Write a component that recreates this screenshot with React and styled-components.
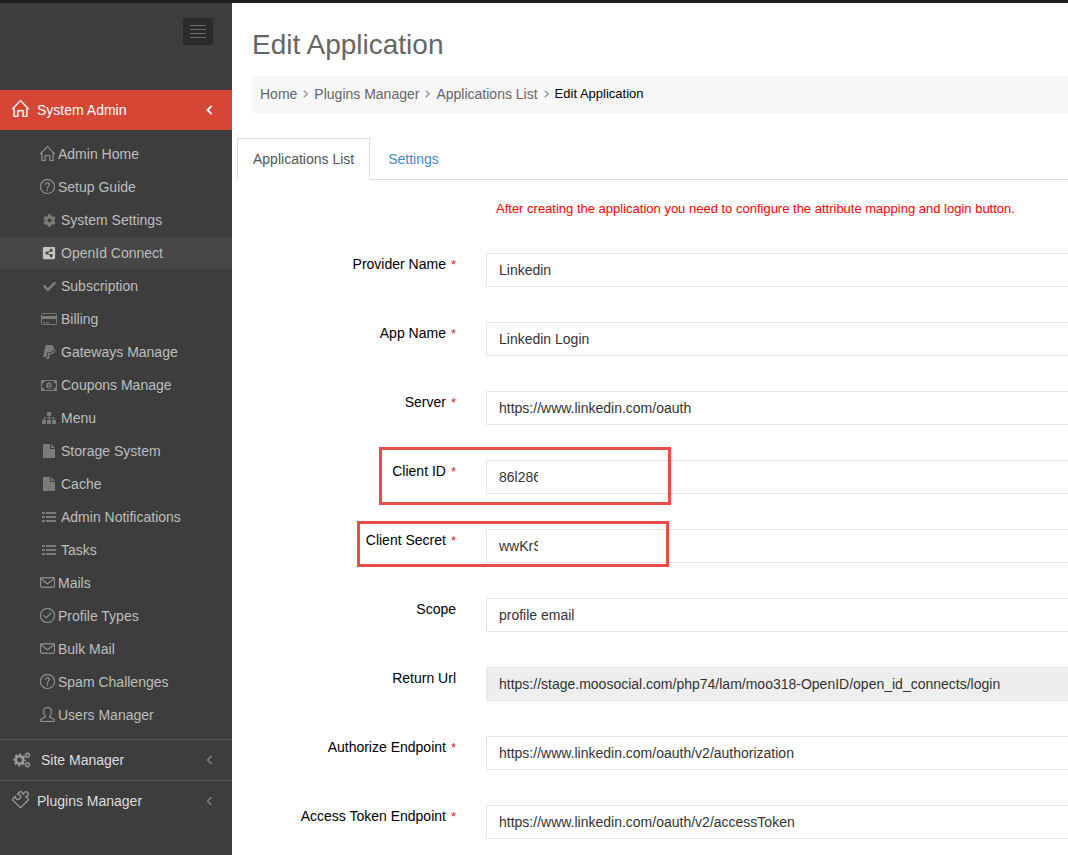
import React from 'react';
import styled, { createGlobalStyle, css } from 'styled-components';
import { SlHome, SlQuestion, SlEnvolope, SlCheck, SlUser, SlPuzzle } from 'react-icons/sl';
import { FaCog, FaShareAltSquare, FaCheck } from 'react-icons/fa';

const GlobalStyle = createGlobalStyle`
  * {
    box-sizing: border-box;
  }

  body {
    margin: 0;
    background: #fff;
    color: #000;
    font: 14px/20px "Liberation Sans", Arial, sans-serif;
  }

  a {
    color: inherit;
    text-decoration: none;
  }

  ul, ol {
    margin: 0;
    padding: 0;
    list-style: none;
  }
`;

const Page = styled.div`
  display: flex;
  min-height: 100vh;
  border-top: 3px solid #1f1f1f;
  overflow: hidden;
`;

const Sidebar = styled.nav`
  flex: 0 0 232px;
  background: #3d3d3d;
`;

const SidebarTop = styled.div`
  display: flex;
  justify-content: flex-end;
  height: 87px;
  padding: 15px 19px;
`;

const Toggler = styled.button`
  display: flex;
  align-items: center;
  justify-content: center;
  width: 30px;
  height: 27px;
  padding: 0;
  border: 0;
  background: #2b2b2b;
  color: #6b6b6b;
`;

const SectionLink = styled.a`
  display: flex;
  align-items: center;
  height: 40px;
  padding: 0 19px 0 12px;
  color: ${props => props.$active ? '#fff' : '#ddd'};
  background: ${props => props.$active ? '#d64635' : 'transparent'};

  > svg {
    color: ${props => props.$active ? '#fff' : '#888'};
  }
`;

const SectionIcon = styled.span`
  display: flex;
  color: ${props => props.$active ? '#fff' : '#999'};

  ${props => props.$line && css`
    padding-bottom: 4px;

    svg {
      stroke: currentColor;
      stroke-width: 24px;
    }
  `}
`;

const SectionTitle = styled.span`
  flex: 1;
  padding-left: ${props => props.$wide ? '10px' : '8px'};
`;

const Section = styled.li`
  & + & {
    border-top: 1px solid #4f4f4f;
  }
`;

const SubMenu = styled.ul`
  display: flex;
  flex-direction: column;
  gap: 1px;
  padding: 8px 0;
`;

const SubLink = styled.a`
  display: flex;
  align-items: center;
  gap: 3px;
  height: 32px;
  padding-left: 40px;
  color: #bdbdbd;

  ${props => props.$active && css`
    background: #474747;
  `}
`;

const MenuIcon = styled.span`
  display: flex;
  justify-content: center;
  width: 18px;
  color: ${props => props.$active ? '#c4c4c4' : '#7b7b7b'};
`;

const LineIcon = styled.span`
  display: flex;
  width: 15px;
  padding-bottom: 2px;
  color: #959595;

  svg {
    stroke: currentColor;
    stroke-width: 16px;
  }
`;

const Main = styled.main`
  flex: 1;
  min-width: 0;
`;

const PageHead = styled.header`
  padding: 22px 0 0 20px;
`;

const Title = styled.h1`
  margin: 0 0 11px;
  font-size: 28px;
  font-weight: 400;
  line-height: 40px;
  color: #666;
`;

const Breadcrumb = styled.ol`
  display: flex;
  gap: 6px;
  padding: 8px 8px 9px;
  background: #f7f7f7;
  color: #666;

  li {
    display: flex;
    align-items: center;
    gap: 6px;
  }

  svg {
    color: #999;
  }
`;

const Current = styled.span`
  font-size: 13px;
  color: #000;
`;

const Tabs = styled.div`
  display: flex;
  gap: 2px;
  margin: 25px 0 0 5px;
  border-bottom: 1px solid #ddd;
`;

const Tab = styled.a`
  margin-bottom: -1px;
  padding: 10px 15px;
  border: 1px solid transparent;
  color: #428bca;

  ${props => props.$active && css`
    border-color: #ddd #ddd #fff;
    background: #fff;
    color: #555;
  `}
`;

const Form = styled.form`
  padding: 19px 0 16px;
`;

const Notice = styled.p`
  margin: 0 0 34px 264px;
  font-size: 13px;
  color: #f00;
`;

const Group = styled.div`
  position: relative;
  display: grid;
  grid-template-columns: 224px 1fr;
  column-gap: 30px;
  margin-bottom: 35px;
`;

const Label = styled.label`
  padding-top: 1px;
  text-align: right;
`;

const Required = styled.span`
  padding-left: 5px;
  font-size: 13px;
  color: #e02222;
`;

const Control = styled.div`
  height: 34px;
  padding: 0 12px;
  border: 1px solid #e5e5e5;
  border-right: 0;
  background: ${props => props.$readOnly ? '#eee' : '#fff'};
`;

const Input = styled.input`
  display: block;
  width: ${props => props.$cut ? '39px' : '100%'};
  height: 32px;
  padding: 0;
  border: 0;
  outline: 0;
  background: transparent;
  font: inherit;
  color: #333;
`;

const Highlight = styled.div`
  position: absolute;
  top: ${props => props.$box.top}px;
  left: ${props => props.$box.left}px;
  width: ${props => props.$box.width}px;
  height: ${props => props.$box.height}px;
  border: 3px solid #e84c48;
  pointer-events: none;
`;

const Bars = () =>
  <svg width="16" height="13" fill="currentColor" aria-hidden="true">
    <path d="M0 0h16v1H0zM0 4h16v1H0zM0 8h16v1H0zM0 12h16v1H0z" />
  </svg>;

const AngleLeft = ({ bold }) =>
  <svg width="7" height="10" fill="none" stroke="currentColor" strokeWidth={bold ? 1.8 : 1.2} aria-hidden="true">
    <path d="M5.500 1L1.500 5l4 4" />
  </svg>;

const AngleRight = () =>
  <svg width="5" height="8" fill="none" stroke="currentColor" strokeWidth="1.3" aria-hidden="true">
    <path d="M.8 .7L4.2 4 .8 7.3" />
  </svg>;

const CardIcon = () =>
  <svg width="16" height="12" aria-hidden="true">
    <rect x=".5" y=".5" width="15" height="11" rx="1" fill="none" stroke="currentColor" />
    <path d="M1 3h14v3H1zM2 9h2v1H2zM5 9h3v1H5z" fill="currentColor" />
  </svg>;

const MoneyIcon = () =>
  <svg width="16" height="11" aria-hidden="true">
    <rect x=".5" y=".5" width="15" height="10" fill="none" stroke="currentColor" />
    <path d="M1 1h2.5A2.5 2.5 0 0 1 1 3.5zM15 1h-2.5A2.5 2.5 0 0 0 15 3.5zM1 10h2.5A2.5 2.5 0 0 0 1 7.5zM15 10h-2.5A2.5 2.5 0 0 1 15 7.5z" fill="currentColor" />
    <ellipse cx="8" cy="5.5" rx="2.6" ry="3.2" fill="currentColor" />
    <path d="M7.3 4.3l.9-.5v3.4M7 7.2h2.2" fill="none" stroke="#3d3d3d" strokeWidth=".8" />
  </svg>;

const PaypalIcon = () =>
  <svg width="13" height="14" fill="currentColor" aria-hidden="true">
    <path d="M2.6 0h5.2c2.4 0 3.5 1.3 3.1 3.3C10.4 5.9 8.7 7.2 6 7.2H4.3L3.4 12H0z" />
    <path d="M11.7 3.2c.7.7.8 1.7.6 2.6-.5 2.3-2 3.3-4.4 3.3H6.8L5.9 14H2.7l.2-1.2h1.3l.9-4.8h1.4c3 0 4.8-1.6 5.2-4.8z" />
  </svg>;

const SitemapIcon = () =>
  <svg width="14" height="12" fill="currentColor" aria-hidden="true">
    <path d="M5 0h4v4H7.5v1.5h5V8H14v4h-4V8h1.5V6.5h-4V8H9v4H5V8h1.5V6.500h-4V8H4v4H0V8h1.5V5.5h5V4H5z" />
  </svg>;

const FileIcon = () =>
  <svg width="12" height="14" fill="currentColor" aria-hidden="true">
    <path d="M0 0h7v5h5v9H0zM8 0l4 4H8z" />
  </svg>;

const ListIcon = () =>
  <svg width="14" height="10" fill="currentColor" aria-hidden="true">
    <path d="M0 0h3v2H0zM0 4h3v2H0zM0 8h3v2H0zM4 0h10v2H4zM4 4h10v2H4zM4 8h10v2H4z" />
  </svg>;

// one big gear with two small ones at its right
const GearsIcon = () =>
  <svg width="19" height="16" fill="none" stroke="currentColor" aria-hidden="true">
    <circle cx="7.5" cy="8" r="3.7" strokeWidth="2.6" />
    <circle cx="7.5" cy="8" r="5.5" strokeDasharray="2.3 2.02" strokeDashoffset="1.15" strokeWidth="1.8" />
    <circle cx="15.5" cy="3.3" r="1.8" strokeWidth="1.3" />
    <circle cx="15.5" cy="3.3" r="2.7" strokeDasharray="1.3 1.527" strokeDashoffset=".65" />
    <circle cx="15.5" cy="12.7" r="1.8" strokeWidth="1.3" />
    <circle cx="15.5" cy="12.7" r="2.7" strokeDasharray="1.3 1.527" strokeDashoffset=".65" />
  </svg>;

const menu = [
  { text: 'Admin Home', icon: <SlHome size={15} />, line: true },
  { text: 'Setup Guide', icon: <SlQuestion size={15} />, line: true },
  { text: 'System Settings', icon: <FaCog size={13} /> },
  { text: 'OpenId Connect', icon: <FaShareAltSquare size={14} />, active: true },
  { text: 'Subscription', icon: <FaCheck size={13} /> },
  { text: 'Billing', icon: <CardIcon /> },
  { text: 'Gateways Manage', icon: <PaypalIcon /> },
  { text: 'Coupons Manage', icon: <MoneyIcon /> },
  { text: 'Menu', icon: <SitemapIcon /> },
  { text: 'Storage System', icon: <FileIcon /> },
  { text: 'Cache', icon: <FileIcon /> },
  { text: 'Admin Notifications', icon: <ListIcon /> },
  { text: 'Tasks', icon: <ListIcon /> },
  { text: 'Mails', icon: <SlEnvolope size={15} />, line: true },
  { text: 'Profile Types', icon: <SlCheck size={15} />, line: true },
  { text: 'Bulk Mail', icon: <SlEnvolope size={15} />, line: true },
  { text: 'Spam Challenges', icon: <SlQuestion size={15} />, line: true },
  { text: 'Users Manager', icon: <SlUser size={15} />, line: true },
];

const fields = [
  { id: 'provider', label: 'Provider Name', value: 'Linkedin', required: true },
  { id: 'app', label: 'App Name', value: 'Linkedin Login', required: true },
  { id: 'server', label: 'Server', value: 'https://www.linkedin.com/oauth', required: true },
  {
    id: 'client-id', label: 'Client ID', value: '86l286', required: true, cut: true,
    box: { top: -13, left: 147, width: 292, height: 58 },
  },
  {
    id: 'client-secret', label: 'Client Secret', value: 'wwKrS', required: true, cut: true,
    box: { top: -8, left: 125, width: 312, height: 46 },
  },
  { id: 'scope', label: 'Scope', value: 'profile email' },
  {
    id: 'return-url', label: 'Return Url', readOnly: true,
    value: 'https://stage.moosocial.com/php74/lam/moo318-OpenID/open_id_connects/login',
  },
  { id: 'authorize', label: 'Authorize Endpoint', value: 'https://www.linkedin.com/oauth/v2/authorization', required: true },
  { id: 'token', label: 'Access Token Endpoint', value: 'https://www.linkedin.com/oauth/v2/accessToken', required: true },
];

const Field = ({ id, label, value, required, readOnly, cut, box }) =>
  <Group>
    <Label htmlFor={id}>
      {label}
      {required && <Required>*</Required>}
    </Label>
    <Control $readOnly={readOnly}>
      <Input id={id} type="text" defaultValue={value} readOnly={readOnly} $cut={cut} />
    </Control>
    {box && <Highlight $box={box} />}
  </Group>;

const MenuItem = ({ text, icon, line, active }) =>
  <li>
    <SubLink href="#menu" $active={active}>
      {line ? <LineIcon>{icon}</LineIcon> : <MenuIcon $active={active}>{icon}</MenuIcon>}
      {text}
    </SubLink>
  </li>;

const App = () =>
  <Page>
    <GlobalStyle />
    <Sidebar>
      <SidebarTop>
        <Toggler type="button" aria-label="Toggle menu"><Bars /></Toggler>
      </SidebarTop>
      <ul>
        <Section>
          <SectionLink href="#system" $active>
            <SectionIcon $line $active><SlHome size={17} /></SectionIcon>
            <SectionTitle>System Admin</SectionTitle>
            <AngleLeft bold />
          </SectionLink>
          <SubMenu>
            {menu.map(item => <MenuItem key={item.text} {...item} />)}
          </SubMenu>
        </Section>
        <Section>
          <SectionLink href="#site">
            <SectionIcon><GearsIcon /></SectionIcon>
            <SectionTitle $wide>Site Manager</SectionTitle>
            <AngleLeft />
          </SectionLink>
        </Section>
        <Section>
          <SectionLink href="#plugins">
            <SectionIcon $line><SlPuzzle size={17} /></SectionIcon>
            <SectionTitle>Plugins Manager</SectionTitle>
            <AngleLeft />
          </SectionLink>
        </Section>
      </ul>
    </Sidebar>
    <Main>
      <PageHead>
        <Title>Edit Application</Title>
        <Breadcrumb>
          <li><a href="#home">Home</a><AngleRight /></li>
          <li><a href="#plugins">Plugins Manager</a><AngleRight /></li>
          <li><a href="#applications">Applications List</a><AngleRight /></li>
          <li><Current>Edit Application</Current></li>
        </Breadcrumb>
      </PageHead>
      <Tabs>
        <Tab href="#applications" $active>Applications List</Tab>
        <Tab href="#settings">Settings</Tab>
      </Tabs>
      <Form>
        <Notice>After creating the application you need to configure the attribute mapping and login button.</Notice>
        {fields.map(field => <Field key={field.id} {...field} />)}
      </Form>
    </Main>
  </Page>;

export default App;
